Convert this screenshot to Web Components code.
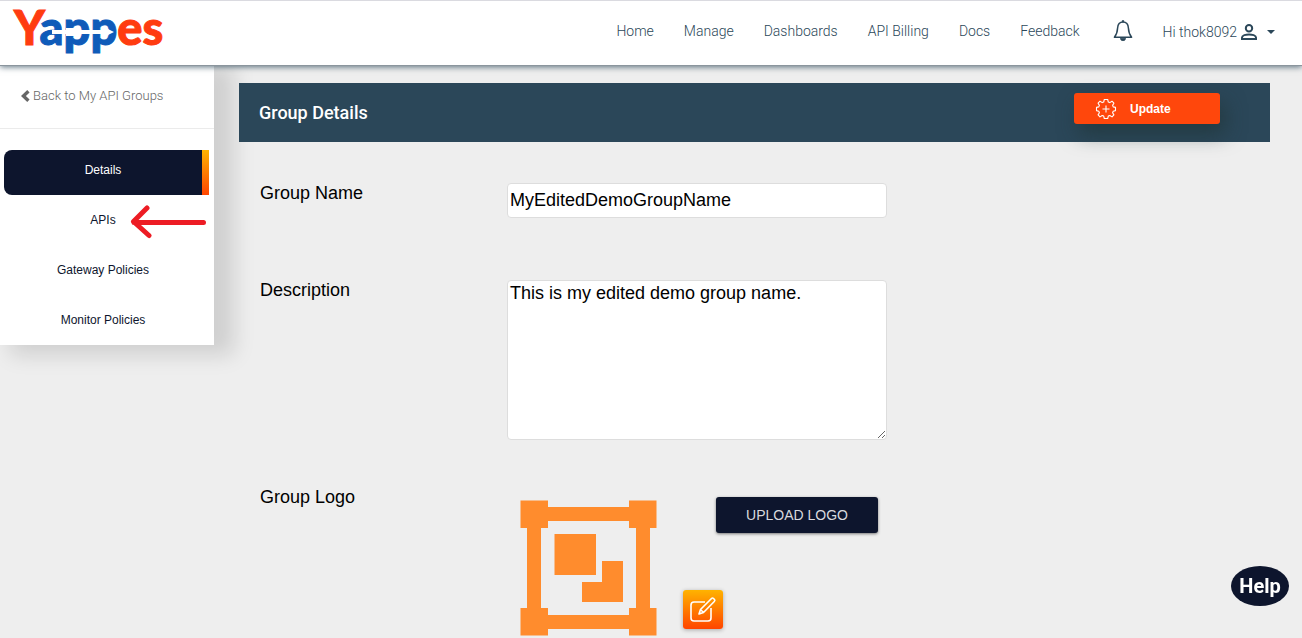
<!DOCTYPE html>
<html lang="en">
<head>
<meta charset="utf-8">
<meta name="viewport" content="width=device-width, initial-scale=1">
<title>Yappes - Group Details</title>
<style>
  :root {
    --slate: #2b4759;
    --navy: #0d152d;
    --orange: #ff470c;
    --page: #eeeeee;
    --sans: "Liberation Sans", Arial, sans-serif;
    --roboto: Roboto, sans-serif;
  }
  body { margin: 0; background: var(--page); font-family: var(--sans); color: #000; }
</style>
</head>
<body>
<yp-app></yp-app>

<template id="yp-app">
  <style>
    :host { display: block; min-height: 100vh; }
    .body { display: grid; grid-template-columns: 214px minmax(0, 1fr); align-items: start; }
    main { padding: 17px 32px 0 25px; }
  </style>
  <yp-header></yp-header>
  <div class="body">
    <yp-sidebar></yp-sidebar>
    <main><yp-group-details></yp-group-details></main>
  </div>
  <yp-help></yp-help>
</template>

<template id="yp-header">
  <style>
    :host {
      display: flex; align-items: center; justify-content: space-between; box-sizing: border-box;
      height: 66px; padding: 0 27px 0 14px; background: #fff;
      border-top: 1px solid #dadae0; border-bottom: 1px solid #8b959d;
      box-shadow: 0 1px 6px rgba(43, 71, 89, .75); position: relative; z-index: 2;
      font: 300 14px/20px var(--roboto); color: var(--slate);
    }
    nav { display: flex; align-items: center; gap: 30px; padding-bottom: 4px; }
    a { color: inherit; text-decoration: none; }
    button { border: 0; padding: 0; background: none; font: inherit; color: inherit; display: flex; align-items: center; }
    .bell { margin-left: 3px; }
    .user { gap: 3px; padding-top: 2px; }
    .user .caret { margin-left: 6px; }
    svg { display: block; }
  </style>
  <a href="#"><yp-logo></yp-logo></a>
  <nav>
    <a href="#">Home</a>
    <a href="#">Manage</a>
    <a href="#">Dashboards</a>
    <a href="#">API Billing</a>
    <a href="#">Docs</a>
    <a href="#">Feedback</a>
    <button class="bell" aria-label="Notifications">
      <svg width="20" height="22" viewBox="0 0 20 22" fill="none" stroke="#2b4759" stroke-width="1.500" stroke-linejoin="round">
        <path d="M10 2C6.600 2 4.800 4.600 4.600 8C4.400 12.400 3.800 14.400 1.400 17.200H18.600C16.200 14.400 15.600 12.400 15.400 8C15.200 4.600 13.400 2 10 2Z"/>
        <path d="M7.500 18.200h5a2.500 2.500 0 0 1-5 0zM9.300 .6h1.400v1.400H9.300z" fill="#2b4759" stroke-width=".8"/>
      </svg>
    </button>
    <button class="user">Hi thok8092
      <svg width="18" height="18" viewBox="0 0 18 18" fill="none" stroke="#2b4759" stroke-width="2">
        <circle cx="9" cy="5.200" r="3.200"/>
        <path d="M2 16V14.600C2 12.400 6 11.400 9 11.400S16 12.400 16 14.600V16Z"/>
      </svg>
      <svg class="caret" width="8" height="4" viewBox="0 0 8 4"><path d="M0 0H8L4 4Z" fill="#2b4759"/></svg>
    </button>
  </nav>
</template>

<template id="yp-logo">
  <style>
    :host { display: block; position: relative; padding-bottom: 12px; font: 900 47px/48px Lato, sans-serif; color: #ff3c10; -webkit-text-stroke: 1px currentColor; }
    span { color: #0f5bb9; }
    svg { display: block; position: absolute; left: 30px; top: 22px; }
  </style>
  Y<span>app</span>es
  <svg width="72" height="14" viewBox="0 0 72 14" aria-hidden="true">
    <path d="M8 5H22V3H34V5H58V1L70 7L58 13V9H34V11H22V9H8Z" fill="#fff"/>
  </svg>
</template>

<template id="yp-sidebar">
  <style>
    :host { display: block; background: #fff; box-shadow: 15px 5px 20px 5px rgba(0, 0, 0, .13); }
    .back {
      display: flex; align-items: center; gap: 3px; box-sizing: border-box; height: 63px;
      padding: 0 21px 3px; border-bottom: 1px solid #ebebeb;
      font: 300 13px/20px var(--roboto); color: #666; text-decoration: none;
    }
    nav { display: flex; flex-direction: column; gap: 5px; padding: 21px 5px 0 4px; }
    .mark { position: absolute; left: 130px; top: 205px; z-index: 1; }
  </style>
  <a class="back" href="#">
    <svg width="9" height="12" viewBox="0 0 9 12"><path d="M7.400 1.300L2.400 6L7.400 10.700" fill="none" stroke="#666" stroke-width="3.400"/></svg>
    Back to My API Groups
  </a>
  <nav>
    <yp-side-item active>Details</yp-side-item>
    <yp-side-item>APIs</yp-side-item>
    <yp-side-item>Gateway Policies</yp-side-item>
    <yp-side-item>Monitor Policies</yp-side-item>
  </nav>
  <svg class="mark" width="78" height="34" viewBox="0 0 78 34" fill="none" stroke="#ed1c24" stroke-width="5" stroke-linecap="round" stroke-linejoin="round">
    <path d="M73.500 17.500H4M17 3L3.500 16.500L19 30.500"/>
  </svg>
</template>

<template id="yp-side-item">
  <style>
    :host { display: block; }
    a {
      display: block; box-sizing: border-box; height: 45px; padding: 10px 7px 0 0;
      border-radius: 8px 0 0 8px; text-align: center; text-decoration: none;
      font: 12px/20px var(--sans); color: var(--navy);
    }
    :host([active]) a {
      color: #fff;
      background: linear-gradient(#ffb300, #ff4500) right / 7px 100% no-repeat, var(--navy);
    }
  </style>
  <a href="#"><slot></slot></a>
</template>

<template id="yp-group-details">
  <style>
    :host { display: block; }
    .bar {
      display: flex; align-items: flex-start; justify-content: space-between; box-sizing: border-box;
      height: 59px; padding: 10px 50px 0 20px; background: var(--slate);
    }
    h1 { margin: 0; font: 500 18px/40px var(--roboto); color: #fff; }
    .update {
      display: flex; align-items: center; gap: 13px; box-sizing: border-box; width: 146px; height: 31px;
      padding: 0 0 0 21px; border: 0; border-radius: 3px; background: var(--orange); color: #fff;
      font: bold 12px/20px var(--sans); box-shadow: 5px 10px 20px rgba(30, 50, 50, .6);
    }
    form { display: flex; flex-direction: column; gap: 47px; padding: 41px 0 0 21px; }
    input, textarea {
      display: block; box-sizing: border-box; width: 380px; max-width: 100%; margin: 0;
      border: 1px solid #ddd; border-radius: 4px; background: #fff; color: #000;
      font: 18px/20px var(--sans);
    }
    input { height: 35px; padding: 0 2px; margin-bottom: 15px; }
    textarea { height: 160px; padding: 2px; }
    .logo { display: flex; gap: 26px; padding: 13px 0 0 13px; }
    .actions { display: flex; flex-direction: column; gap: 57px; margin-top: -3px; }
    .upload {
      height: 36px; width: 162px; margin-left: 33px; padding: 0; border: 0; border-radius: 3px;
      background: var(--navy); color: #d9dade; font: 14px/20px var(--sans);
      box-shadow: 0 1px 3px rgba(0, 0, 0, .5);
    }
    .edit {
      width: 40px; height: 39px; padding: 0; border: 0; border-radius: 3px;
      background: linear-gradient(#ffb300, #ff4500); box-shadow: 0 1px 4px rgba(0, 0, 0, .3);
    }
    svg { display: block; }
  </style>
  <div class="bar">
    <h1>Group Details</h1>
    <button class="update">
      <svg width="22" height="23" viewBox="0 0 22 23" fill="none" stroke="#fff" stroke-width="1.100" stroke-linejoin="round">
        <g transform="translate(.5 1.500)">
          <path d="M8.800 1h3.400l.6 2.500 1.500.6 2.200-1.400 1.900 2-1.300 2.200.6 1.500 2.300.5v3.200l-2.300.6-.6 1.500 1.300 2.200-1.900 2-2.200-1.400-1.500.6-.6 2.400H8.800l-.6-2.400-1.500-.6-2.200 1.400-1.900-2 1.300-2.200-.6-1.500L1 12.100V8.900l2.300-.5.6-1.500-1.300-2.200 1.900-2 2.200 1.400 1.500-.6z"/>
          <path d="M10.500 7v7M7 10.500h7"/>
        </g>
      </svg>
      Update
    </button>
  </div>
  <form>
    <yp-field-row>
      <label slot="label" for="name">Group Name</label>
      <input id="name" type="text" value="MyEditedDemoGroupName">
    </yp-field-row>
    <yp-field-row>
      <label slot="label" for="desc">Description</label>
      <textarea id="desc">This is my edited demo group name.</textarea>
    </yp-field-row>
    <yp-field-row>
      <span slot="label">Group Logo</span>
      <div class="logo">
        <svg width="137" height="136" viewBox="0 0 137 136" fill="#ff8c2d" role="img" aria-label="Group logo">
          <path fill-rule="evenodd" d="M.5 .5H28V7H109V.5H136.500V28H130V108H136.500V135.500H109V129H28V135.500H.5V108H7V28H.5ZM28 21V28H21V108H28V115H109V108H116V28H109V21Z"/>
          <path d="M34.500 34H76V75H34.500ZM82 61H103V102H62V82H82Z"/>
        </svg>
        <div class="actions">
          <button class="upload" type="button">UPLOAD LOGO</button>
          <button class="edit" type="button" aria-label="Edit logo">
            <svg width="40" height="39" viewBox="0 0 40 39" fill="none" stroke="#fff" stroke-width="1.600" stroke-linejoin="round">
              <path d="M22 12H11Q8 12 8 15V28Q8 31 11 31H25Q28 31 28 28V18"/>
              <path d="M16 24L17.500 19.500L28.500 8.500Q29.500 7.500 30.500 8.500L31.500 9.500Q32.300 10.500 31.300 11.500L20.500 22.500ZM17.500 19.500L20.500 22.500"/>
            </svg>
          </button>
        </div>
      </div>
    </yp-field-row>
  </form>
</template>

<template id="yp-field-row">
  <style>
    :host { display: grid; grid-template-columns: 247px minmax(0, 1fr); align-items: start; font: 18px/20px var(--sans); }
  </style>
  <slot name="label"></slot>
  <div><slot></slot></div>
</template>

<template id="yp-help">
  <style>
    :host { display: block; position: fixed; right: 13px; bottom: 32px; z-index: 3; }
    button {
      display: block; width: 58px; height: 40px; padding: 0; border: 0; border-radius: 50%;
      background: var(--navy); color: #fff; font: 700 20px/40px var(--roboto);
    }
  </style>
  <button>Help</button>
</template>

<script>
  class YpElement extends HTMLElement {
    constructor() {
      super();
      const template = document.getElementById(this.localName);
      this.attachShadow({ mode: 'open' }).append(template.content.cloneNode(true));
    }
  }
  for (const name of ['yp-logo', 'yp-side-item', 'yp-field-row', 'yp-help', 'yp-header', 'yp-sidebar', 'yp-group-details', 'yp-app']) {
    customElements.define(name, class extends YpElement {});
  }
</script>
</body>
</html>
